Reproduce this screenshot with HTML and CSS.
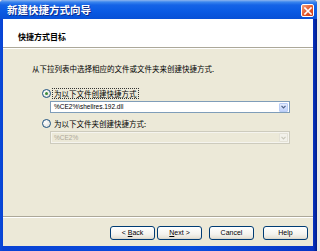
FILE: index.html
```html
<!DOCTYPE html>
<html lang="zh-CN">
<head>
<meta charset="utf-8">
<title>新建快捷方式向导</title>
<link rel="stylesheet" href="styles.css">
</head>
<body>
<div class="window">
  <div class="titlebar">
    <span class="title">新建快捷方式向导</span>
    <span class="close">
      <svg width="8" height="8" viewBox="0 0 8 8"><path d="M1 1 L7 7 M7 1 L1 7" stroke="#fff" stroke-width="1.6" stroke-linecap="square"/></svg>
    </span>
  </div>
  <div class="client">
    <div class="header"><span class="header-title">快捷方式目标</span></div>
    <div class="content">
      <div class="intro">从下拉列表中选择相应的文件或文件夹来创建快捷方式.</div>
      <div class="option">
        <span class="radio checked"></span>
        <span class="label focused">为以下文件创建快捷方式</span>
      </div>
      <div class="combo">
        <span class="combo-text">%CE2%\shellres.192.dll</span>
        <span class="combo-btn">
          <svg width="5" height="4" viewBox="0 0 5 4"><path d="M0.5 0.8 L2.5 2.8 L4.5 0.8" stroke="#4d6185" stroke-width="1.2" fill="none"/></svg>
        </span>
      </div>
      <div class="option second">
        <span class="radio"></span>
        <span class="label">为以下文件夹创建快捷方式:</span>
      </div>
      <div class="combo disabled">
        <span class="combo-text">%CE2%</span>
        <span class="combo-btn">
          <svg width="5" height="4" viewBox="0 0 5 4"><path d="M0.5 0.8 L2.5 2.8 L4.5 0.8" stroke="#c9c7ba" stroke-width="1.2" fill="none"/></svg>
        </span>
      </div>
    </div>
    <div class="buttons">
      <button class="btn back">&lt; <u>B</u>ack</button>
      <button class="btn next"><u>N</u>ext &gt;</button>
      <button class="btn cancel">Cancel</button>
      <button class="btn help">Help</button>
    </div>
  </div>
</div>
</body>
</html>
```
FILE: styles.css
```css
html, body {
  margin: 0;
  padding: 0;
}
body {
  background: #e9e9e9;
  width: 320px;
  height: 251px;
  overflow: hidden;
  font-family: "Liberation Sans", "Noto Sans CJK SC", sans-serif;
}
.window {
  width: 317px;
  height: 251px;
  display: flex;
  flex-direction: column;
  background: linear-gradient(to right, #0a4ad8 0, #0842d4 3px, #0a4fdf 60%, #0734c4 313px, #001c8a 317px);
  border-radius: 4px 4px 0 0;
  box-sizing: border-box;
}
.titlebar {
  height: 19px;
  flex: none;
  display: flex;
  align-items: center;
  justify-content: space-between;
  padding: 1px 3px 0 7px;
  box-sizing: border-box;
  border-radius: 4px 4px 0 0;
  background: linear-gradient(#8fb5ee 0, #3b86ee 2px, #1563e6 5px, #0a5ae3 60%, #0750d6 100%);
}
.title {
  color: #fff;
  font-family: "Noto Sans CJK SC", sans-serif;
  font-weight: bold;
  font-size: 10.5px;
  line-height: 12px;
  text-shadow: 1px 1px 0 #0a2a8c;
}
.close {
  width: 11px;
  height: 11px;
  border: 1px solid #fff;
  border-radius: 2px;
  background: linear-gradient(135deg, #f4a07c, #e2562a 55%, #c8401c);
  display: flex;
  align-items: center;
  justify-content: center;
  margin-top: 1px;
}
.close svg { display: block; }
.client {
  flex: 1;
  margin: 0 4px 5px 3px;
  background: #ece9d8;
  display: flex;
  flex-direction: column;
}
.header {
  height: 29px;
  flex: none;
  background: #fff;
  border-bottom: 1px solid #aca899;
  box-shadow: 0 1px 0 #fff;
  padding: 7px 0 0 15px;
  box-sizing: border-box;
}
.header-title {
  font-family: "Noto Sans CJK SC", sans-serif;
  font-weight: bold;
  font-size: 8px;
  line-height: 10px;
  color: #000;
}
.content {
  flex: 1;
  padding: 16px 0 0 29px;
  border-bottom: 1px solid #aca899;
  box-shadow: 0 1px 0 #fff;
  display: flex;
  flex-direction: column;
  align-items: flex-start;
  font-size: 7.5px;
  line-height: 10px;
}
.intro {
  font-family: "Noto Sans CJK SC", sans-serif;
  color: #000;
}
.option {
  display: flex;
  align-items: center;
  margin: 14px 0 0 10px;
  height: 10px;
}
.option.second {
  margin-top: 5px;
}
.radio {
  width: 7px;
  height: 7px;
  border: 1px solid #1c5180;
  border-radius: 50%;
  background: radial-gradient(circle at 35% 35%, #fff, #dcdbd3);
  position: relative;
  margin-right: 1px;
}
.radio.checked::after {
  content: "";
  position: absolute;
  left: 2px;
  top: 2px;
  width: 3px;
  height: 3px;
  border-radius: 50%;
  background: #3a8a3a;
}
.label {
  font-family: "Noto Sans CJK SC", sans-serif;
  color: #000;
  padding: 0 1px;
  line-height: 9px;
  border: 1px dotted transparent;
}
.label.focused {
  border-color: #333;
}
.combo {
  width: 240px;
  height: 12px;
  margin: 3px 0 0 18px;
  box-sizing: border-box;
  border: 1px solid #7f9db9;
  background: #fff;
  display: flex;
  align-items: center;
  justify-content: space-between;
  padding: 0 1px 0 3px;
}
.combo.disabled {
  height: 13px;
  background: #ece9d8;
  border-color: #cdcbbd;
  box-shadow: inset 0 0 0 1px #f5f4ee;
}
.combo-text {
  font-size: 6.5px;
  color: #000;
  line-height: 10px;
}
.combo.disabled .combo-text {
  color: #aca899;
}
.combo-btn {
  width: 9px;
  height: 9px;
  box-sizing: border-box;
  border: 1px solid #b9cdf6;
  border-radius: 1px;
  background: linear-gradient(#e3ebfd, #c1d3fb);
  display: flex;
  align-items: center;
  justify-content: center;
}
.combo.disabled .combo-btn {
  border-color: #e3e1d6;
  background: #f2f1ea;
}
.combo-btn svg { display: block; }
.buttons {
  height: 29px;
  flex: none;
  display: flex;
  justify-content: flex-end;
  align-items: flex-start;
  padding: 9px 5px 0 0;
  box-sizing: border-box;
}
.btn {
  width: 45px;
  height: 14px;
  padding: 0;
  border: 1px solid #003c74;
  border-radius: 3px;
  background: linear-gradient(#ffffff, #f4f3ee 60%, #e6e3d8 90%, #d6d0c5);
  font-family: "Liberation Sans", sans-serif;
  font-size: 7px;
  color: #000;
  line-height: 12px;
}
.btn.next { margin-left: 2px; }
.btn.cancel { margin-left: 7px; }
.btn.help { margin-left: 9px; }
```
